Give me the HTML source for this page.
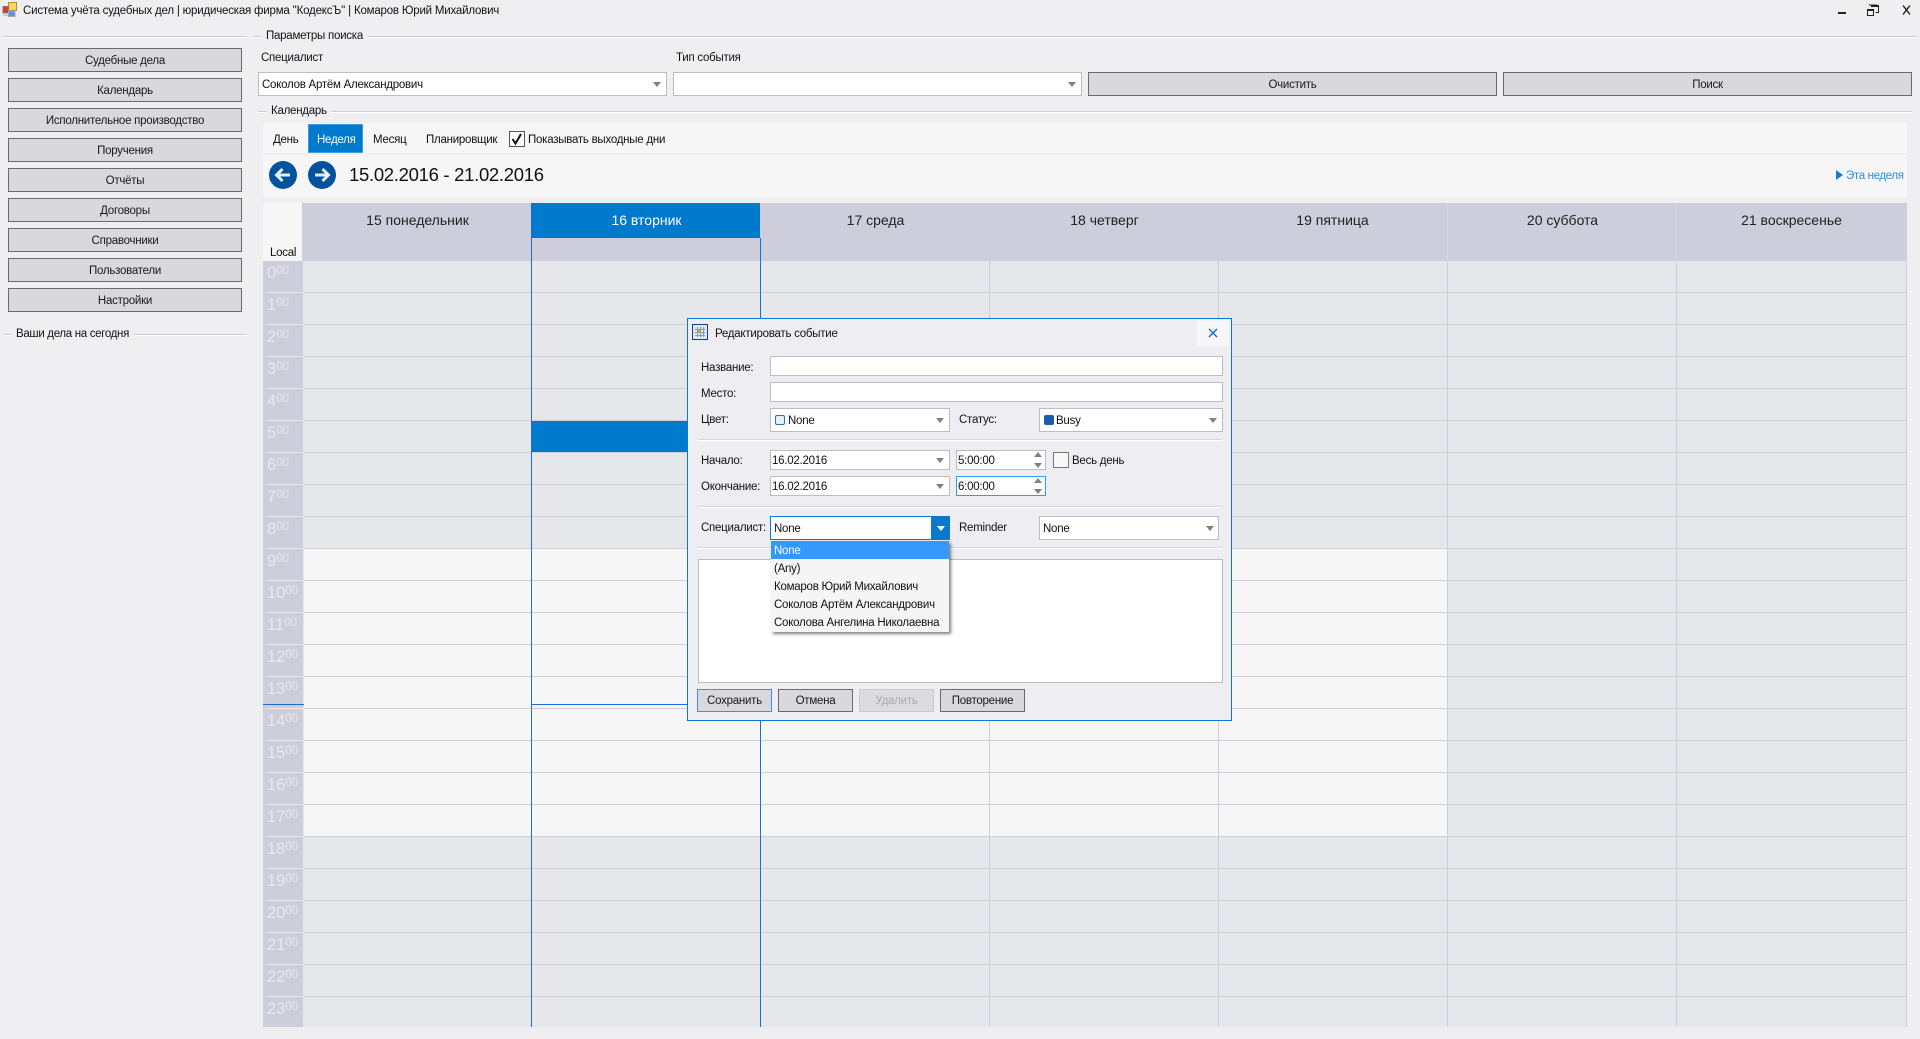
<!DOCTYPE html>
<html><head><meta charset="utf-8"><style>
html,body{margin:0;padding:0;width:1920px;height:1039px;overflow:hidden;background:#efeff2}
body{position:relative;font-family:"Liberation Sans","DejaVu Sans",sans-serif;font-size:11.5px;letter-spacing:-.25px;color:#111}
div,span.a{position:absolute;box-sizing:border-box}
.t{white-space:nowrap;height:16px;line-height:16px;margin-top:1px}
.c{text-align:center}
.ln{height:2px;background:linear-gradient(#cdcddb 50%,#fff 50%)}
.b{background:#d8d8dd;border:1.5px solid #6a6a6a;padding-top:1px;text-align:center;white-space:nowrap;color:#1a1a1a}
.i{background:#fff;border:1px solid #bcbcc2}
.ar{width:0;height:0;border-left:4px solid transparent;border-right:4px solid transparent;border-top:5px solid #808080}
.up{width:0;height:0;border-left:4px solid transparent;border-right:4px solid transparent;border-bottom:5px solid #808080}
.d{font-size:14px;letter-spacing:0;height:20px;line-height:20px;text-align:center;top:210px;width:229px;white-space:nowrap;color:#222}
.h{left:267px;font-size:16.5px;letter-spacing:0;color:#e9e9ef;height:20px;line-height:20px;white-space:nowrap}
.h span{font-size:11.5px;position:relative;top:-4px}
.m{left:701px}
.it{left:774px;color:#111}
</style></head><body>

<!-- title bar -->
<svg style="position:absolute;left:2px;top:2px" width="16" height="16" viewBox="0 0 16 16"><rect x="6.5" y=".5" width="8" height="8" fill="#f8d75a" stroke="#c08a2a"/><rect x="1" y="4.5" width="5.5" height="6.5" fill="#d83a3a" stroke="#8a6a6a"/><rect x="6.5" y="9" width="6.5" height="5.5" fill="#5a94e0" stroke="#9ab"/><rect x="1" y="11" width="5" height="3" fill="#ccc"/></svg>
<div class="t" style="left:23px;top:2px;letter-spacing:-.2px">Система учёта судебных дел | юридическая фирма ''КодексЪ'' | Комаров Юрий Михайлович</div>
<svg style="position:absolute;left:1836px;top:3px" width="80" height="16" viewBox="0 0 80 16"><rect x="2" y="9" width="8" height="2" fill="#222"/><path d="M35.500 2.500h7v7h-3M33 2h8" fill="none" stroke="#222" stroke-width="1"/><rect x="35" y="2" width="8" height="2" fill="#222"/><rect x="31.500" y="6.500" width="6" height="6" fill="none" stroke="#222"/><rect x="31" y="6" width="7" height="2" fill="#222"/><path d="M67 2.500l7 9M74 2.500l-7 9" stroke="#222" stroke-width="1.400" fill="none"/></svg>

<!-- left -->
<div class="ln" style="left:3px;top:36px;width:244px"></div>
<div class="b" style="left:8px;top:48px;width:234px;height:24px;line-height:22px">Судебные дела</div>
<div class="b" style="left:8px;top:78px;width:234px;height:24px;line-height:22px">Календарь</div>
<div class="b" style="left:8px;top:108px;width:234px;height:24px;line-height:22px">Исполнительное производство</div>
<div class="b" style="left:8px;top:138px;width:234px;height:24px;line-height:22px">Поручения</div>
<div class="b" style="left:8px;top:168px;width:234px;height:24px;line-height:22px">Отчёты</div>
<div class="b" style="left:8px;top:198px;width:234px;height:24px;line-height:22px">Договоры</div>
<div class="b" style="left:8px;top:228px;width:234px;height:24px;line-height:22px">Справочники</div>
<div class="b" style="left:8px;top:258px;width:234px;height:24px;line-height:22px">Пользователи</div>
<div class="b" style="left:8px;top:288px;width:234px;height:24px;line-height:22px">Настройки</div>
<div class="ln" style="left:3px;top:334px;width:244px"></div>
<div class="t" style="left:12px;top:325px;background:#efeff2;padding:0 4px;letter-spacing:-.32px">Ваши дела на сегодня</div>

<!-- search params -->
<div class="ln" style="left:253px;top:36px;width:1664px"></div>
<div class="t" style="left:262px;top:27px;background:#efeff2;padding:0 4px">Параметры поиска</div>
<div class="t" style="left:261px;top:49px">Специалист</div>
<div class="t" style="left:676px;top:49px">Тип события</div>
<div class="i" style="left:258px;top:72px;width:409px;height:24px"></div>
<div class="t" style="left:262px;top:76px">Соколов Артём Александрович</div>
<div class="ar" style="left:653px;top:82px"></div>
<div class="i" style="left:673px;top:72px;width:409px;height:24px"></div>
<div class="ar" style="left:1068px;top:82px"></div>
<div class="b" style="left:1088px;top:72px;width:409px;height:24px;line-height:22px">Очистить</div>
<div class="b" style="left:1503px;top:72px;width:409px;height:24px;line-height:22px">Поиск</div>

<!-- calendar group -->
<div class="ln" style="left:258px;top:111px;width:1654px"></div>
<div class="t" style="left:267px;top:102px;background:#efeff2;padding:0 4px">Календарь</div>
<div style="left:263px;top:123px;width:1644px;height:30px;background:#f6f6f6"></div>
<div style="left:263px;top:155px;width:1644px;height:42px;background:#f6f6f6"></div>
<div class="t" style="left:273px;top:131px">День</div>
<div style="left:308px;top:124px;width:55px;height:29px;background:#007acc;border:1px solid #3c9ae0"></div>
<div class="t" style="left:317px;top:131px;color:#fff">Неделя</div>
<div class="t" style="left:373px;top:131px">Месяц</div>
<div class="t" style="left:426px;top:131px">Планировщик</div>
<div style="left:509px;top:131px;width:16px;height:16px;border:1px solid #555;background:#fbfbfb"></div>
<svg style="position:absolute;left:509px;top:131px" width="16" height="16" viewBox="0 0 16 16"><path d="M3.500 8l3 4.500L12 3" fill="none" stroke="#111" stroke-width="2"/></svg>
<div class="t" style="left:528px;top:131px">Показывать выходные дни</div>
<svg style="position:absolute;left:269px;top:161px" width="28" height="28" viewBox="0 0 28 28"><circle cx="14" cy="14" r="14" fill="#03529c"/><path d="M21 14H8M13.500 8L7.500 14l6 6" fill="none" stroke="#e8eef5" stroke-width="3"/></svg>
<svg style="position:absolute;left:308px;top:161px" width="28" height="28" viewBox="0 0 28 28"><circle cx="14" cy="14" r="14" fill="#03529c"/><path d="M7 14h13M14.500 8l6 6-6 6" fill="none" stroke="#e8eef5" stroke-width="3"/></svg>
<div class="t" style="left:349px;top:162px;height:24px;line-height:24px;font-size:18.5px;letter-spacing:-.3px">15.02.2016 - 21.02.2016</div>
<div style="left:1836px;top:170px;width:0;height:0;border-left:7px solid #1a78d6;border-top:5px solid transparent;border-bottom:5px solid transparent"></div>
<div class="t" style="left:1846px;top:167px;color:#2a8ee8;letter-spacing:-.35px">Эта неделя</div>

<!-- calendar header -->
<div style="left:263px;top:203px;width:40px;height:58px;background:#f6f6f6"></div>
<div style="left:302px;top:203px;width:1605px;height:58px;background:#cdcddb"></div>
<div style="left:531px;top:203px;width:229px;height:35px;background:#007acc"></div>
<div style="left:531px;top:238px;width:1px;height:23px;background:#1a6ddb"></div>
<div style="left:760px;top:238px;width:1px;height:23px;background:#1a6ddb"></div>
<div style="left:1447px;top:203px;width:1px;height:58px;background:#d6d6e2"></div>
<div style="left:1676px;top:203px;width:1px;height:58px;background:#d6d6e2"></div>
<div class="t" style="left:270px;top:244px;color:#111">Local</div>
<div class="d" style="left:303px">15 понедельник</div>
<div class="d" style="left:532px;color:#fff">16 вторник</div>
<div class="d" style="left:761px">17 среда</div>
<div class="d" style="left:990px">18 четверг</div>
<div class="d" style="left:1218px">19 пятница</div>
<div class="d" style="left:1448px">20 суббота</div>
<div class="d" style="left:1677px">21 воскресенье</div>

<!-- grid -->
<div style="left:304px;top:261px;width:1603px;height:766px;background:#e6e7eb"></div>
<div style="left:304px;top:548px;width:1143px;height:288px;background:#f7f6f7"></div>
<div style="left:532px;top:420px;width:228px;height:32px;background:#007acc"></div>
<div style="left:304px;top:292px;width:1603px;height:735px;background:repeating-linear-gradient(#cdcddb 0,#cdcddb 1px,transparent 1px,transparent 32px)"></div>
<div style="left:531px;top:261px;width:1px;height:766px;background:#1a6ddb"></div>
<div style="left:760px;top:261px;width:1px;height:766px;background:#1a6ddb"></div>
<div style="left:989px;top:261px;width:1px;height:766px;background:#cdcddb"></div>
<div style="left:1218px;top:261px;width:1px;height:766px;background:#cdcddb"></div>
<div style="left:1447px;top:261px;width:1px;height:766px;background:#cdcddb"></div>
<div style="left:1676px;top:261px;width:1px;height:766px;background:#cdcddb"></div>
<div style="left:1906px;top:261px;width:1px;height:766px;background:#cdcddb"></div>
<div style="left:263px;top:261px;width:41px;height:766px;background:#cdcddb;border-right:1px solid #e6e7eb"></div>
<div style="left:267px;top:292px;width:36px;height:735px;background:repeating-linear-gradient(#e9e9ef 0,#e9e9ef 1px,transparent 1px,transparent 32px)"></div>
<div style="left:263px;top:704px;width:41px;height:1px;background:#1a6ddb"></div>
<div style="left:532px;top:704px;width:228px;height:1px;background:#1a6ddb"></div>
<div class="h" style="top:263px">0<span>00</span></div>
<div class="h" style="top:295px">1<span>00</span></div>
<div class="h" style="top:327px">2<span>00</span></div>
<div class="h" style="top:359px">3<span>00</span></div>
<div class="h" style="top:391px">4<span>00</span></div>
<div class="h" style="top:423px">5<span>00</span></div>
<div class="h" style="top:455px">6<span>00</span></div>
<div class="h" style="top:487px">7<span>00</span></div>
<div class="h" style="top:519px">8<span>00</span></div>
<div class="h" style="top:551px">9<span>00</span></div>
<div class="h" style="top:583px">10<span>00</span></div>
<div class="h" style="top:615px">11<span>00</span></div>
<div class="h" style="top:647px">12<span>00</span></div>
<div class="h" style="top:679px">13<span>00</span></div>
<div class="h" style="top:711px">14<span>00</span></div>
<div class="h" style="top:743px">15<span>00</span></div>
<div class="h" style="top:775px">16<span>00</span></div>
<div class="h" style="top:807px">17<span>00</span></div>
<div class="h" style="top:839px">18<span>00</span></div>
<div class="h" style="top:871px">19<span>00</span></div>
<div class="h" style="top:903px">20<span>00</span></div>
<div class="h" style="top:935px">21<span>00</span></div>
<div class="h" style="top:967px">22<span>00</span></div>
<div class="h" style="top:999px">23<span>00</span></div>

<!-- dialog -->
<div style="left:687px;top:318px;width:545px;height:403px;background:#eeeef2;border:1px solid #0a78d7"></div>
<svg style="position:absolute;left:692px;top:324px" width="16" height="16" viewBox="0 0 16 16"><rect x=".5" y=".5" width="15" height="15" fill="#dfe8f5" stroke="#1d3f78"/><path d="M3 5.500h10M3 8.500h10M3 11.500h10M5.500 3v10M8.500 3v10M11.500 3v10" stroke="#7a9ccb" stroke-width="1"/><rect x="6" y="6" width="3" height="3" fill="#f09020"/></svg>
<div class="t" style="left:715px;top:325px">Редактировать событие</div>
<div style="left:1197px;top:320px;width:32px;height:26px;background:#f7f7f9"></div>
<svg style="position:absolute;left:1207px;top:327px" width="12" height="12" viewBox="0 0 12 12"><path d="M2 2l8 8M10 2l-8 8" stroke="#0a6cc0" stroke-width="1.300" fill="none"/></svg>

<div class="t m" style="top:359px">Название:</div>
<div class="i" style="left:770px;top:356px;width:453px;height:20px"></div>
<div class="t m" style="top:385px">Место:</div>
<div class="i" style="left:770px;top:382px;width:453px;height:20px"></div>
<div class="t m" style="top:411px">Цвет:</div>
<div class="i" style="left:770px;top:408px;width:180px;height:24px"></div>
<div style="left:775px;top:415px;width:10px;height:10px;border:1px solid #3a6ab0;border-radius:2px;background:#e6eef9"></div>
<div class="t" style="left:788px;top:412px">None</div>
<div class="ar" style="left:936px;top:418px"></div>
<div class="t" style="left:959px;top:411px">Статус:</div>
<div class="i" style="left:1039px;top:408px;width:184px;height:24px"></div>
<div style="left:1044px;top:415px;width:10px;height:10px;border-radius:2px;background:#1f5baa"></div>
<div class="t" style="left:1056px;top:412px">Busy</div>
<div class="ar" style="left:1209px;top:418px"></div>
<div class="ln" style="left:698px;top:439px;width:524px;background:linear-gradient(#d6d6dc 50%,#fff 50%)"></div>

<div class="t m" style="top:452px">Начало:</div>
<div class="i" style="left:770px;top:450px;width:180px;height:20px"></div>
<div class="t" style="left:772px;top:452px">16.02.2016</div>
<div class="ar" style="left:936px;top:458px"></div>
<div class="i" style="left:956px;top:450px;width:90px;height:20px"></div>
<div class="t" style="left:958px;top:452px">5:00:00</div>
<div class="up" style="left:1034px;top:452px"></div>
<div class="ar" style="left:1034px;top:463px"></div>
<div style="left:1053px;top:452px;width:16px;height:16px;border:1px solid #777;background:#f8f8f9"></div>
<div class="t" style="left:1072px;top:452px">Весь день</div>

<div class="t m" style="top:478px">Окончание:</div>
<div class="i" style="left:770px;top:476px;width:180px;height:20px"></div>
<div class="t" style="left:772px;top:478px">16.02.2016</div>
<div class="ar" style="left:936px;top:484px"></div>
<div class="i" style="left:956px;top:476px;width:90px;height:20px;border-color:#3399ff"></div>
<div class="t" style="left:958px;top:478px">6:00:00</div>
<div class="up" style="left:1034px;top:478px"></div>
<div class="ar" style="left:1034px;top:489px"></div>
<div class="ln" style="left:698px;top:506px;width:524px;background:linear-gradient(#d6d6dc 50%,#fff 50%)"></div>

<div class="t m" style="top:519px">Специалист:</div>
<div class="i" style="left:770px;top:516px;width:180px;height:24px;border-color:#0a78d7"></div>
<div class="t" style="left:774px;top:520px">None</div>
<div style="left:931px;top:516px;width:19px;height:24px;background:#0a78cc"></div>
<div class="ar" style="left:937px;top:526px;border-top-color:#fff"></div>
<div class="t" style="left:959px;top:519px">Reminder</div>
<div class="i" style="left:1039px;top:516px;width:180px;height:24px"></div>
<div class="t" style="left:1043px;top:520px">None</div>
<div class="ar" style="left:1206px;top:526px"></div>
<div class="ln" style="left:698px;top:547px;width:524px;background:linear-gradient(#d6d6dc 50%,#fff 50%)"></div>
<div class="i" style="left:698px;top:559px;width:525px;height:124px"></div>

<div style="left:771px;top:541px;width:178px;height:91px;background:#f5f5f5;box-shadow:2px 2px 3px rgba(0,0,0,.5)"></div>
<div style="left:771px;top:541px;width:178px;height:18px;background:#3399ff"></div>
<div class="t it" style="top:542px;color:#fff">None</div>
<div class="t it" style="top:560px">(Any)</div>
<div class="t it" style="top:578px">Комаров Юрий Михайлович</div>
<div class="t it" style="top:596px">Соколов Артём Александрович</div>
<div class="t it" style="top:614px">Соколова Ангелина Николаевна</div>

<div class="b" style="left:697px;top:689px;width:75px;height:23px;line-height:20px;border-color:#3d8fe8">Сохранить</div>
<div class="b" style="left:778px;top:689px;width:75px;height:23px;line-height:20px">Отмена</div>
<div class="b" style="left:859px;top:689px;width:75px;height:23px;line-height:20px;background:#dcdcdf;border-color:#cacace;color:#aaa">Удалить</div>
<div class="b" style="left:940px;top:689px;width:85px;height:23px;line-height:20px">Повторение</div>
</body></html>
